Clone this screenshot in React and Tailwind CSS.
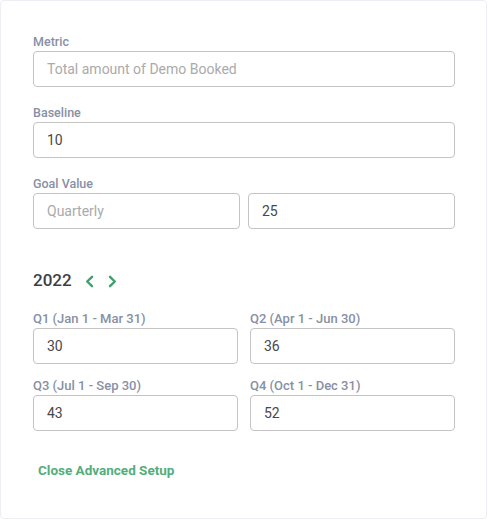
import { useState } from 'react';

const Field = ({ label, value, placeholder, labelSize = 'text-[12.5px]' }) => (
    <div className="flex flex-col">
        <label className={`${labelSize} leading-[16px] font-medium text-[#8790a6] mb-[1px]`}>{label}</label>
        <input
            type="text"
            defaultValue={value}
            placeholder={placeholder}
            className="h-[36px] w-full px-[13px] text-[14px] text-[#484848] placeholder:text-[#aaa] border border-[#c4c4c4] rounded-[4px] outline-none bg-white"
        />
    </div>
);

const Chevron = ({ dir }) => (
    <svg width="11" height="13" viewBox="0 0 11 13" fill="none">
        <path
            d={dir === 'left' ? 'M8 1.8L3.2 6.5 8 11.2' : 'M3 1.8l4.8 4.7L3 11.2'}
            stroke="#3f9f6f"
            strokeWidth="2.4"
            strokeLinecap="round"
            strokeLinejoin="round"
        />
    </svg>
);

export default function App() {
    const [year, setYear] = useState(2022);

    return (
        <div className="w-[488px] h-[520px] bg-white" style={{ fontFamily: 'Roboto, "Liberation Sans", sans-serif' }}>
            <div className="h-[519px] w-[487px] border border-[#eceef3] rounded-[4px] pl-[32px] pr-[31px] pt-[33px]">
                <div className="flex flex-col gap-[18px]">
                    <Field label="Metric" placeholder="Total amount of Demo Booked" />
                    <Field label="Baseline" value="10" />
                    <div className="flex flex-col">
                        <label className="text-[12.5px] leading-[16px] font-medium text-[#8790a6] mb-[1px]">Goal Value</label>
                        <div className="flex gap-[8px]">
                            <input
                                type="text"
                                placeholder="Quarterly"
                                className="h-[36px] flex-1 min-w-0 px-[13px] text-[14px] text-[#484848] placeholder:text-[#aaa] border border-[#c4c4c4] rounded-[4px] outline-none"
                            />
                            <input
                                type="text"
                                defaultValue="25"
                                className="h-[36px] flex-1 min-w-0 px-[13px] text-[14px] text-[#484848] border border-[#c4c4c4] rounded-[4px] outline-none"
                            />
                        </div>
                    </div>
                </div>

                <div className="flex items-center mt-[40px] h-[24px]">
                    <span className="text-[17px] font-medium text-[#3b3f48]">{year}</span>
                    <button className="ml-[12px] flex items-center" onClick={() => setYear(year - 1)}>
                        <Chevron dir="left" />
                    </button>
                    <button className="ml-[12px] flex items-center" onClick={() => setYear(year + 1)}>
                        <Chevron dir="right" />
                    </button>
                </div>

                <div className="grid grid-cols-2 gap-x-[12px] gap-y-[14px] mt-[18px]">
                    <Field label="Q1 (Jan 1 - Mar 31)" value="30" labelSize="text-[13px]" />
                    <Field label="Q2 (Apr 1 - Jun 30)" value="36" labelSize="text-[13px]" />
                    <Field label="Q3 (Jul 1 - Sep 30)" value="43" labelSize="text-[13px]" />
                    <Field label="Q4 (Oct 1 - Dec 31)" value="52" labelSize="text-[13px]" />
                </div>

                <button className="mt-[29px] ml-[5px] text-[13.5px] font-bold text-[#52ae7c]">
                    Close Advanced Setup
                </button>
            </div>
        </div>
    );
}
